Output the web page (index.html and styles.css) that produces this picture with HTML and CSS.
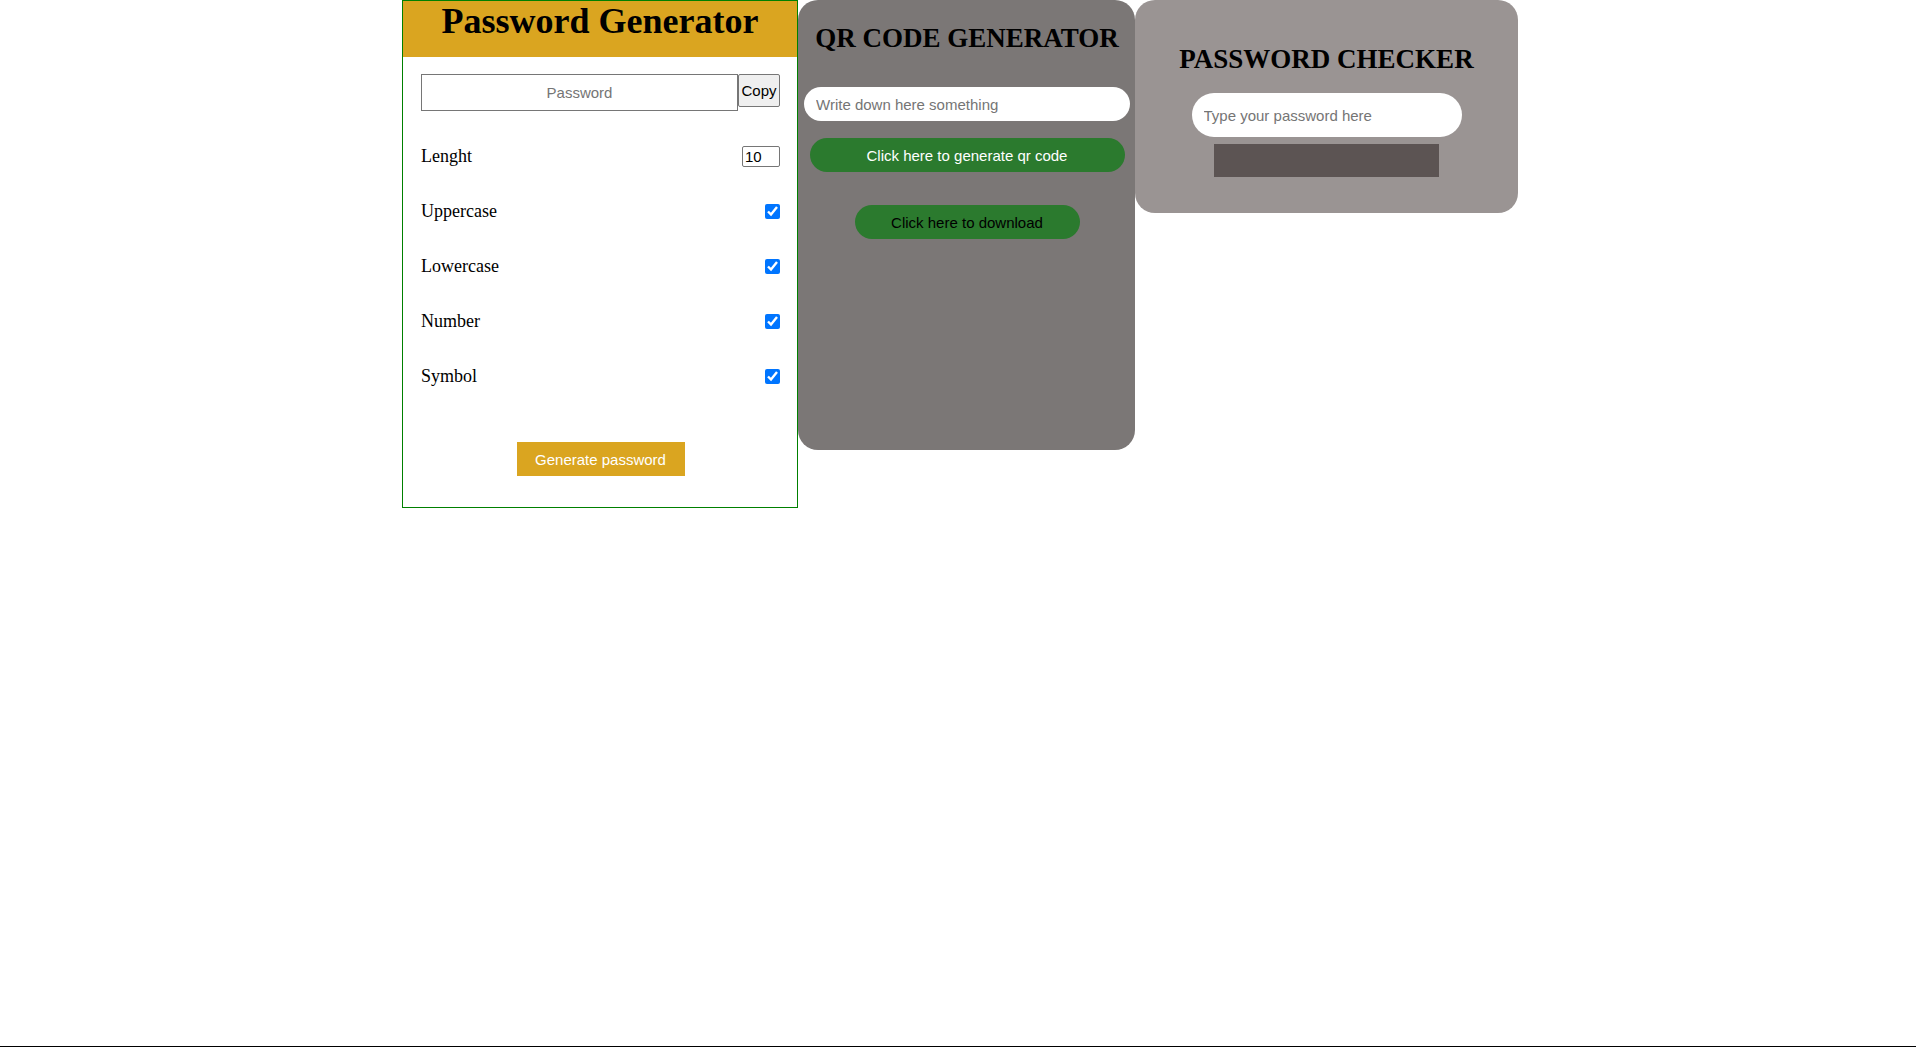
FILE: index.html
```html
<!DOCTYPE html>
<html lang="en">
<head>
<meta charset="utf-8">
<title>Tools</title>
<link rel="stylesheet" href="styles.css">
</head>
<body>
<div class="page">
  <section class="gen">
    <header class="gen-head"><h1>Password Generator</h1></header>
    <div class="gen-body">
      <div class="pw-row">
        <input class="pw-out" type="text" placeholder="Password">
        <button class="copy">Copy</button>
      </div>
      <div class="opts">
        <label class="opt"><span>Lenght</span><input class="len" type="number" value="10"></label>
        <label class="opt"><span>Uppercase</span><input class="chk" type="checkbox" checked></label>
        <label class="opt"><span>Lowercase</span><input class="chk" type="checkbox" checked></label>
        <label class="opt"><span>Number</span><input class="chk" type="checkbox" checked></label>
        <label class="opt"><span>Symbol</span><input class="chk" type="checkbox" checked></label>
      </div>
      <div class="gen-act"><button class="gen-btn">Generate password</button></div>
    </div>
  </section>

  <section class="qr">
    <h2 class="card-title">QR CODE GENERATOR</h2>
    <input class="qr-in" type="text" placeholder="Write down here something">
    <button class="qr-gen">Click here to generate qr code</button>
    <button class="qr-dl">Click here to download</button>
  </section>

  <section class="checker">
    <h2 class="card-title">PASSWORD CHECKER</h2>
    <input class="chk-in" type="password" placeholder="Type your password here">
    <div class="chk-bar"></div>
  </section>
</div>
</body>
</html>
```

FILE: styles.css
```css
html, body {
  margin: 0;
  padding: 0;
}

body {
  min-height: 100vh;
  box-sizing: border-box;
  border-bottom: 1px solid #000;
  background: #fff;
  font-family: "Liberation Serif", "Times New Roman", serif;
}

.page {
  display: flex;
  justify-content: center;
  align-items: flex-start;
  padding-left: 4px;
}

/* Password generator */
.gen {
  width: 396px;
  box-sizing: border-box;
  border: 1px solid #008000;
  background: #fff;
}

.gen-head {
  background: #daa520;
  height: 56px;
}

.gen-head h1 {
  margin: 0;
  font: bold 36px/40px "Liberation Serif", "Times New Roman", serif;
  text-align: center;
  color: #000;
}

.gen-body {
  padding: 17px 17px 31px 18px;
}

.pw-row {
  display: flex;
  align-items: flex-start;
}

.pw-out {
  width: 317px;
  height: 37px;
  box-sizing: border-box;
  margin: 0;
  padding: 0;
  border: 1px solid #767676;
  text-align: center;
  font: 15px "Liberation Sans", Arial, sans-serif;
}

.pw-out::placeholder,
.qr-in::placeholder,
.chk-in::placeholder {
  color: #757575;
}

.copy {
  width: 42px;
  height: 33px;
  box-sizing: border-box;
  margin: 0;
  padding: 0;
  background: #efefef;
  border: 1px solid #767676;
  border-radius: 2px;
  color: #000;
  font: 15px "Liberation Sans", Arial, sans-serif;
}

.opts {
  margin-top: 18px;
}

.opt {
  display: flex;
  justify-content: space-between;
  align-items: center;
  height: 55px;
  font: 18px "Liberation Serif", "Times New Roman", serif;
  color: #000;
}

.len {
  width: 38px;
  height: 21px;
  box-sizing: border-box;
  margin: 0;
  padding: 0 2px;
  border: 1px solid #767676;
  border-radius: 2px;
  font: 15px "Liberation Sans", Arial, sans-serif;
  color: #000;
  -moz-appearance: textfield;
}

.len::-webkit-inner-spin-button,
.len::-webkit-outer-spin-button {
  -webkit-appearance: none;
  margin: 0;
}

.chk {
  width: 15px;
  height: 15px;
  margin: 0;
  accent-color: #0075ff;
}

.gen-act {
  display: flex;
  justify-content: center;
  margin-top: 38px;
}

.gen-btn {
  width: 168px;
  height: 34px;
  border: none;
  background: #daa520;
  color: #fff;
  font: 15px "Liberation Sans", Arial, sans-serif;
  padding: 0;
}

/* Cards */
.card-title {
  margin: 0;
  font: bold 27px/29px "Liberation Serif", "Times New Roman", serif;
  color: #000;
  text-align: center;
  white-space: nowrap;
}

.qr {
  width: 337px;
  height: 450px;
  box-sizing: border-box;
  background: #7b7776;
  border-radius: 20px;
  padding: 24px 5px 0 6px;
  display: flex;
  flex-direction: column;
  align-items: center;
}

.qr-in {
  margin-top: 34px;
  width: 326px;
  height: 34px;
  box-sizing: border-box;
  border: none;
  border-radius: 17px;
  padding: 0 12px;
  background: #fff;
  font: 15px "Liberation Sans", Arial, sans-serif;
  outline: none;
}

.qr-gen,
.qr-dl {
  height: 34px;
  border: none;
  border-radius: 17px;
  background: #2b7a2e;
  font: 15px "Liberation Sans", Arial, sans-serif;
  padding: 0;
}

.qr-gen {
  margin-top: 17px;
  width: 315px;
  color: #fff;
}

.qr-dl {
  margin-top: 33px;
  width: 225px;
  color: #000;
}

.checker {
  width: 383px;
  height: 213px;
  box-sizing: border-box;
  background: #9a9493;
  border-radius: 20px;
  padding-top: 45px;
  display: flex;
  flex-direction: column;
  align-items: center;
}

.chk-in {
  margin-top: 19px;
  width: 270px;
  height: 44px;
  box-sizing: border-box;
  border: none;
  border-radius: 22px;
  padding: 0 12px;
  background: #fff;
  font: 15px "Liberation Sans", Arial, sans-serif;
  outline: none;
}

.chk-bar {
  margin-top: 7px;
  width: 225px;
  height: 33px;
  background: #5c5453;
}
```
